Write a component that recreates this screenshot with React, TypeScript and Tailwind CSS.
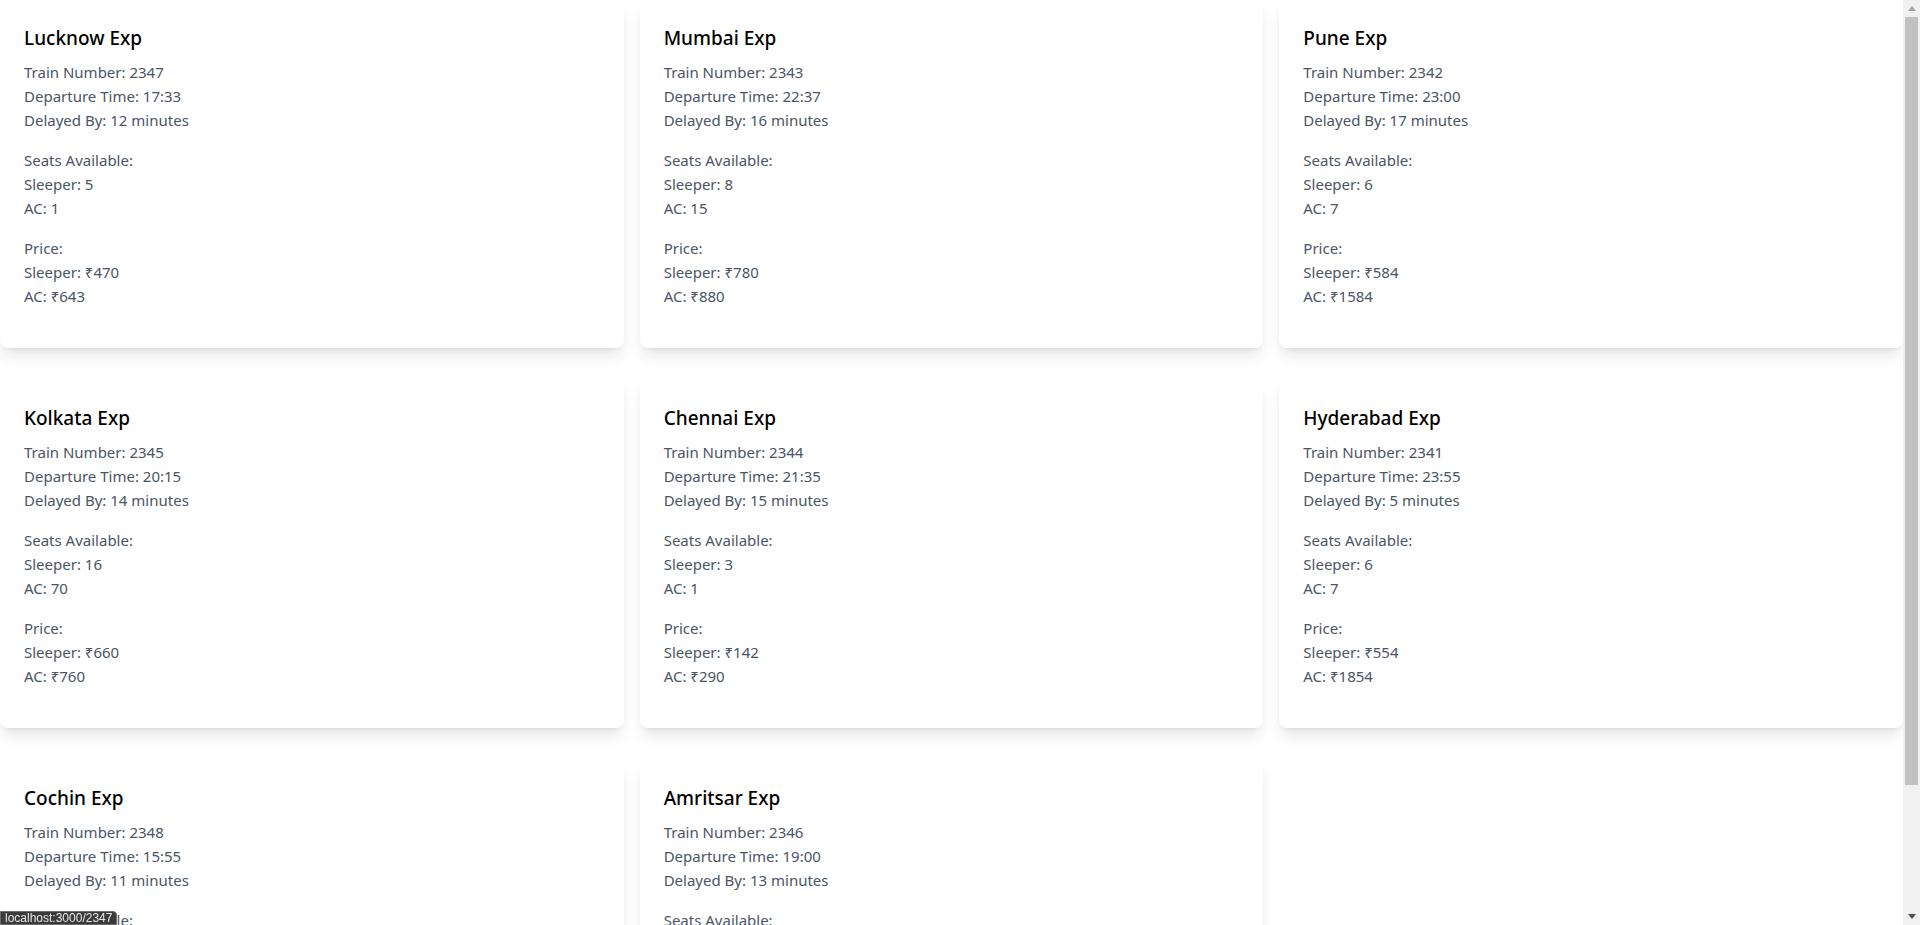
import React from 'react'

type Train = {
  name: string
  number: number
  time: string
  delay: number
  seats: { sleeper: number; ac: number }
  price: { sleeper: number; ac: number }
}

const TRAINS: Train[] = [
  { name: 'Lucknow Exp', number: 2347, time: '17:33', delay: 12, seats: { sleeper: 5, ac: 1 }, price: { sleeper: 470, ac: 643 } },
  { name: 'Mumbai Exp', number: 2343, time: '22:37', delay: 16, seats: { sleeper: 8, ac: 15 }, price: { sleeper: 780, ac: 880 } },
  { name: 'Pune Exp', number: 2342, time: '23:00', delay: 17, seats: { sleeper: 6, ac: 7 }, price: { sleeper: 584, ac: 1584 } },
  { name: 'Kolkata Exp', number: 2345, time: '20:15', delay: 14, seats: { sleeper: 16, ac: 70 }, price: { sleeper: 660, ac: 760 } },
  { name: 'Chennai Exp', number: 2344, time: '21:35', delay: 15, seats: { sleeper: 3, ac: 1 }, price: { sleeper: 142, ac: 290 } },
  { name: 'Hyderabad Exp', number: 2341, time: '23:55', delay: 5, seats: { sleeper: 6, ac: 7 }, price: { sleeper: 554, ac: 1854 } },
  { name: 'Cochin Exp', number: 2348, time: '15:55', delay: 11, seats: { sleeper: 12, ac: 4 }, price: { sleeper: 410, ac: 920 } },
  { name: 'Amritsar Exp', number: 2346, time: '19:00', delay: 13, seats: { sleeper: 9, ac: 22 }, price: { sleeper: 515, ac: 1230 } },
]

function TrainCard({ t }: { t: Train }) {
  return (
    <div className="bg-white rounded-lg shadow-lg p-6">
      <h2 className="text-[19px] leading-7 font-medium text-black mb-2">{t.name}</h2>
      <div className="mb-4 text-gray-600">
        <p>Train Number: {t.number}</p>
        <p>Departure Time: {t.time}</p>
        <p>Delayed By: {t.delay} minutes</p>
      </div>
      <div className="mb-4 text-gray-600">
        <p>Seats Available:</p>
        <p>Sleeper: {t.seats.sleeper}</p>
        <p>AC: {t.seats.ac}</p>
      </div>
      <div className="mb-4 text-gray-600">
        <p>Price:</p>
        <p>Sleeper: ₹{t.price.sleeper}</p>
        <p>AC: ₹{t.price.ac}</p>
      </div>
    </div>
  )
}

// the browser scrollbar from the screenshot
function Scrollbar() {
  return (
    <div className="w-[17px] shrink-0 bg-[#f1f1f1] flex flex-col">
      <div className="h-[17px] flex items-center justify-center">
        <svg width="8" height="5" viewBox="0 0 8 5"><path d="M4 0 L8 5 L0 5 Z" fill="#a3a3a3" /></svg>
      </div>
      <div className="mx-[2px] h-[768px] bg-[#c1c1c1]" />
      <div className="flex-1" />
      <div className="h-[17px] flex items-center justify-center">
        <svg width="8" height="5" viewBox="0 0 8 5"><path d="M0 0 L8 0 L4 5 Z" fill="#505050" /></svg>
      </div>
    </div>
  )
}

export default function App() {
  return (
    <div className="h-screen flex bg-white font-['Noto_Sans',sans-serif] text-[15px] leading-6">
      <div className="flex-1 overflow-hidden">
        <div className="grid grid-cols-3 gap-x-4 gap-y-8">
          {TRAINS.map(t => <TrainCard key={t.number} t={t} />)}
        </div>
      </div>
      <Scrollbar />
      <div className="fixed bottom-0 left-0 bg-[#3b3b3b] border border-[#6b6b6b] text-[#e8e8e8] text-[12px] leading-[12px] px-1 rounded-tr-sm font-['Liberation_Sans',sans-serif]">
        localhost:3000/2347
      </div>
    </div>
  )
}
